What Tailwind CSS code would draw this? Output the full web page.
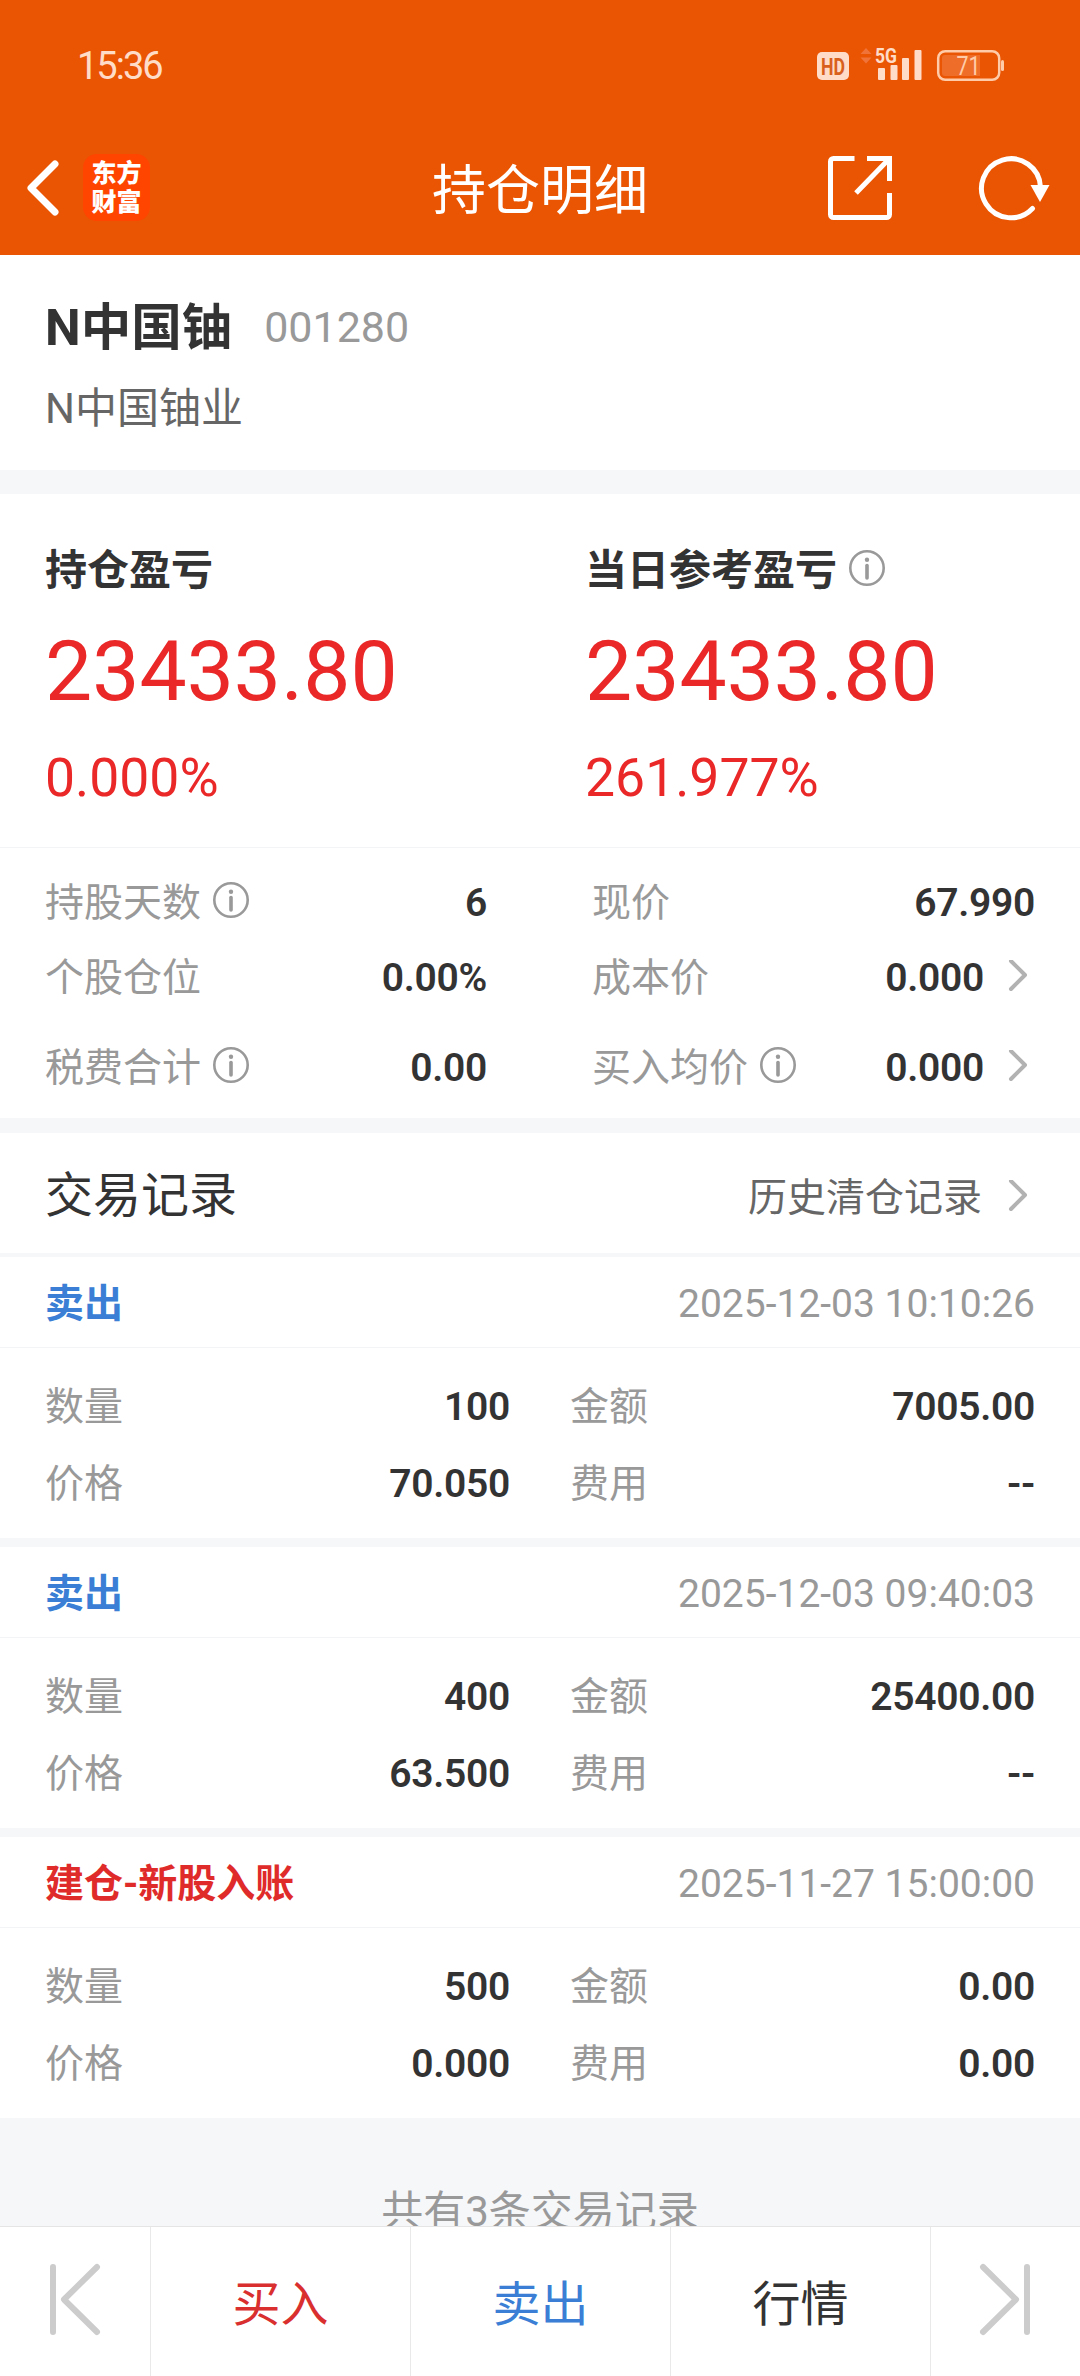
<!DOCTYPE html>
<html lang="zh-CN">
<head>
  <meta charset="UTF-8" />
  <meta name="viewport" content="width=device-width, initial-scale=1.0"/>
  <title>持仓明细</title>
  <script src="https://cdn.jsdelivr.net/npm/@tailwindcss/browser@4"></script>
</head>
<body class="flex h-[2376px] w-[1080px] flex-col overflow-hidden bg-[#f6f7f9] font-['Roboto','Noto_Sans_CJK_SC',sans-serif] text-[39px] leading-[60px] text-[#333]">
  <header class="h-[255px] shrink-0 bg-[#ea5504] text-white">
    <!-- status bar -->
    <div class="flex h-[130px] items-center justify-between pr-[76px] pl-[77px] text-[#ffdcc8]">
      <span class="pt-px text-[38px] tracking-[-2px]">15:36</span>
      <svg class="h-[40px] w-[187px]" viewBox="817 44 187 40" fill="currentColor">
        <rect x="817" y="51" width="32" height="28" rx="5"/>
        <text x="833" y="73.500" font-size="23" font-weight="700" text-anchor="middle" textLength="24" lengthAdjust="spacingAndGlyphs" fill="#d9601c">HD</text>
        <path d="M866 47l5.500 6h-11zM866 62.500l5.500-6h-11z" fill="#f0743a"/>
        <text x="875" y="62" font-size="21" font-weight="700" textLength="22" lengthAdjust="spacingAndGlyphs">5G</text>
        <rect x="878" y="67" width="7" height="12" rx="1"/>
        <rect x="890.500" y="64" width="7" height="15" rx="1"/>
        <rect x="902" y="57" width="7" height="22" rx="1"/>
        <rect x="914.500" y="49" width="7" height="30" rx="1"/>
        <rect x="938.200" y="50.200" width="61" height="28.600" rx="7" fill="none" stroke="#ffcba8" stroke-width="2.500"/>
        <path d="M945 54h35v21h-35a3 3 0 0 1-3-3v-15a3 3 0 0 1 3-3z" fill="#ee6d28"/>
        <rect x="1001" y="59" width="3" height="11" rx="1.500" fill="#ffcba8"/>
        <text x="968.500" y="73.500" font-size="25" text-anchor="middle" textLength="24" lengthAdjust="spacingAndGlyphs" fill="#ffcba8">71</text>
      </svg>
    </div>
    <!-- nav bar -->
    <div class="grid h-[115px] grid-cols-[1fr_auto_1fr] items-center px-[27px]">
      <div class="flex items-center gap-[24px]">
        <svg class="h-[60px] w-[32px]" viewBox="0 0 32 60" fill="none" stroke="currentColor" stroke-width="7" stroke-linecap="round" stroke-linejoin="round"><path d="M28 6L4 30l24 24"/></svg>
        <div class="grid h-[67px] w-[67px] place-content-center rounded-[14px] bg-[#ff4500] text-center text-[25px] leading-[29px] font-black">
          <div>东方</div>
          <div>财富</div>
        </div>
      </div>
      <h1 class="pt-[8px] text-[54px]">持仓明细</h1>
      <div class="flex items-center justify-end gap-[86px]">
        <svg class="h-[64px] w-[64px]" viewBox="0 0 64 64" fill="none" stroke="currentColor" stroke-width="5">
          <path d="M26.500 2.500H5.500a3 3 0 0 0-3 3v53a3 3 0 0 0 3 3h53a3 3 0 0 0 3-3V37"/>
          <path d="M39 2.500h22.500V25M61 3L28 37"/>
        </svg>
        <svg class="h-[66px] w-[75px]" viewBox="978 154 75 66" fill="none" stroke="currentColor" stroke-width="5" stroke-linecap="round">
          <path d="M1040.500 186A29.500 29.500 0 1 0 1032.500 207.500"/>
          <path d="M1030.500 184h19l-9.500 17z" fill="currentColor" stroke="none"/>
        </svg>
      </div>
    </div>
  </header>

  <section class="h-[215px] shrink-0 bg-white px-[45px] pt-[43px]">
    <div class="flex items-center gap-[32px]">
      <span class="text-[50.5px] font-bold">N中国铀</span>
      <span class="-mt-[3px] text-[43px] text-[#999]">001280</span>
    </div>
    <div class="mt-[21px] text-[42px] text-[#666]">N中国铀业</div>
  </section>

  <section class="mt-[24px] grid h-[354px] shrink-0 grid-cols-2 border-b border-[#f3f4f5] bg-white pt-[47px]">
    <div class="pl-[45px] text-[#ea2828]">
      <div class="text-[42px] font-bold text-[#333]">持仓盈亏</div>
      <div class="mt-[29px] text-[84px] leading-[84px]">23433.80</div>
      <div class="mt-[34px] text-[53.5px]">0.000%</div>
    </div>
    <div class="pl-[45px] text-[#ea2828]">
      <div class="flex items-center gap-[12px] text-[42px] font-bold text-[#333]">当日参考盈亏 <svg data-info class="h-[36px] w-[36px]"></svg></div>
      <div class="mt-[29px] text-[84px] leading-[84px]">23433.80</div>
      <div class="mt-[34px] text-[53.5px]">261.977%</div>
    </div>
  </section>

  <section class="grid h-[270px] shrink-0 grid-cols-[442px_443px] content-start justify-between bg-white px-[45px] pt-[25px] text-[#999]">
    <div class="flex items-center gap-[12px]">持股天数 <svg data-info class="h-[36px] w-[36px]"></svg><b class="ml-auto font-semibold tracking-[-0.3px] text-[#333]">6</b></div>
    <div class="flex items-center">现价<b class="ml-auto font-semibold tracking-[-0.3px] text-[#333]">67.990</b></div>
    <div class="mt-[15px] flex items-center">个股仓位<b class="ml-auto font-semibold tracking-[-0.3px] text-[#333]">0.00%</b></div>
    <div class="mt-[15px] flex items-center">成本价<b class="ml-auto font-semibold tracking-[-0.3px] text-[#333]">0.000</b><svg data-arrow class="mr-[6px] ml-[23px] h-[36px] w-[22px]"></svg></div>
    <div class="mt-[30px] flex items-center gap-[12px]">税费合计 <svg data-info class="h-[36px] w-[36px]"></svg><b class="ml-auto font-semibold tracking-[-0.3px] text-[#333]">0.00</b></div>
    <div class="mt-[30px] flex items-center">买入均价<svg data-info class="ml-[12px] h-[36px] w-[36px]"></svg><b class="ml-auto font-semibold tracking-[-0.3px] text-[#333]">0.000</b><svg data-arrow class="mr-[6px] ml-[23px] h-[36px] w-[22px]"></svg></div>
  </section>

  <section class="mt-[15px] flex h-[120px] shrink-0 items-center bg-white px-[45px] pt-[5px]">
    <h2 class="text-[48px]">交易记录</h2>
    <a class="ml-auto flex items-center pt-[5px] text-[#666]">历史清仓记录<svg data-arrow class="mr-[6px] ml-[25px] h-[36px] w-[22px]"></svg></a>
  </section>

  <main id="records" class="mt-[4px] flex shrink-0 flex-col gap-[9px]"></main>

  <div class="h-[108px] shrink-0 overflow-hidden pt-[64px] text-center text-[42px] text-[#999]">共有3条交易记录</div>

  <nav class="grid h-[150px] shrink-0 grid-cols-[151px_260px_260px_260px_148px] grid-rows-[149px] divide-x divide-[#e9e9e9] border-t border-[#e5e5e5] bg-white text-center text-[48px] leading-[156px]">
    <svg class="h-[149px] w-full" viewBox="0 0 150 149" fill="none" stroke="#ccc" stroke-width="6" stroke-linecap="round" stroke-linejoin="round"><path d="M53 40v65M97 40L64 72.500l33 32.500"/></svg>
    <a class="text-[#d9302f]">买入</a>
    <a class="text-[#3a7fd5]">卖出</a>
    <a>行情</a>
    <svg class="h-[149px] w-full" viewBox="0 0 148 149" fill="none" stroke="#ccc" stroke-width="6" stroke-linecap="round" stroke-linejoin="round"><path d="M96 40v65M52 40l33 32.500L52 105"/></svg>
  </nav>

  <script>
    const records = [
      { type: "卖出", color: "text-[#3a7fd5]", time: "2025-12-03 10:10:26", qty: "100", amount: "7005.00", price: "70.050", fee: "--" },
      { type: "卖出", color: "text-[#3a7fd5]", time: "2025-12-03 09:40:03", qty: "400", amount: "25400.00", price: "63.500", fee: "--" },
      { type: "建仓-新股入账", color: "text-[#e02b2b]", time: "2025-11-27 15:00:00", qty: "500", amount: "0.00", price: "0.000", fee: "0.00" },
    ];

    document.getElementById("records").innerHTML = records.map(r => `
      <article class="h-[281px] bg-white">
        <div class="flex h-[91px] items-center justify-between border-b border-[#f3f4f5] px-[45px] pt-[3px]">
          <b class="${r.color}">${r.type}</b>
          <span class="text-[#999]">${r.time}</span>
        </div>
        <div class="grid grid-cols-[465px_465px] justify-between gap-y-[17px] px-[45px] pt-[29px] text-[#999]">
          <div class="flex justify-between">数量<b class="font-semibold tracking-[-0.3px] text-[#333]">${r.qty}</b></div>
          <div class="flex justify-between">金额<b class="font-semibold tracking-[-0.3px] text-[#333]">${r.amount}</b></div>
          <div class="flex justify-between">价格<b class="font-semibold tracking-[-0.3px] text-[#333]">${r.price}</b></div>
          <div class="flex justify-between">费用<b class="font-semibold tracking-[-0.3px] text-[#333]">${r.fee}</b></div>
        </div>
      </article>`).join("");

    // shared icons
    document.querySelectorAll("[data-info]").forEach(el => {
      el.setAttribute("viewBox", "0 3 36 36");
      el.innerHTML = `<circle cx="18" cy="18" r="16.700" fill="none" stroke="#999" stroke-width="2.600"/><circle cx="18" cy="9.700" r="2.200" fill="#999"/><path d="M18 15.500v12.500" stroke="#999" stroke-width="3.600" stroke-linecap="round"/>`;
      el.style.overflow = "visible";
    });
    document.querySelectorAll("[data-arrow]").forEach(el => {
      el.setAttribute("viewBox", "0 3 22 36");
      el.innerHTML = `<path d="M4 4l14 14L4 32" fill="none" stroke="#b2b2b2" stroke-width="4" stroke-linecap="round" stroke-linejoin="round"/>`;
    });
  </script>
</body>
</html>
